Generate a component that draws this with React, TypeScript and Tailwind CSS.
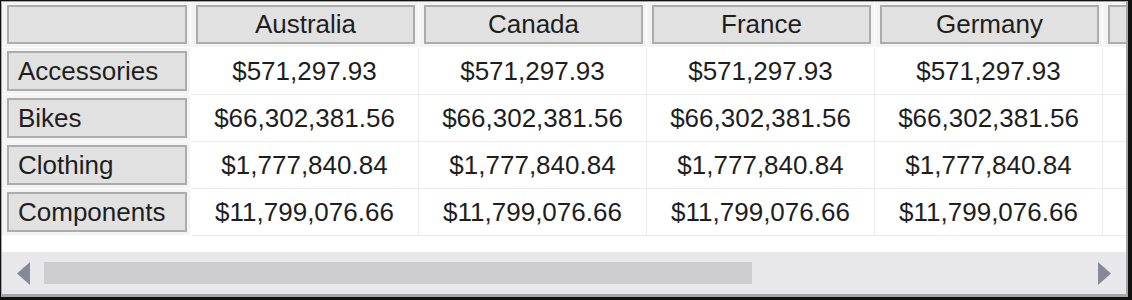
import React from 'react';

const COLUMNS = ['Australia', 'Canada', 'France', 'Germany', 'United Kingdom'];

const ROWS: { label: string; value: string }[] = [
  { label: 'Accessories', value: '$571,297.93' },
  { label: 'Bikes', value: '$66,302,381.56' },
  { label: 'Clothing', value: '$1,777,840.84' },
  { label: 'Components', value: '$11,799,076.66' },
];

function HeaderCell({ children, left }: { children?: React.ReactNode; left?: boolean }) {
  return (
    <div className="bg-[#f4f4f4] border-r border-b border-white pl-[5px] pr-[3px] pt-[3px] pb-[3px] flex">
      <div
        className={
          'flex-1 flex items-center border-2 border-[#acacac] bg-[#e1e1e1] whitespace-nowrap overflow-hidden ' +
          (left ? 'justify-start pl-[9px]' : 'justify-center')
        }
      >
        {children}
      </div>
    </div>
  );
}

function Arrow({ dir }: { dir: 'left' | 'right' }) {
  return (
    <svg width="13" height="23" viewBox="0 0 13 23" className="shrink-0">
      <path d={dir === 'left' ? 'M13 0 L0 11.5 L13 23 Z' : 'M0 0 L13 11.5 L0 23 Z'} fill="#868893" />
    </svg>
  );
}

export default function App() {
  return (
    <div
      className="w-[1132px] h-[300px] bg-[#111] pt-px pl-px pr-[4px] pb-[3px] text-[26px] text-[#1e1e1e]"
      style={{ fontFamily: '"Liberation Sans", Arial, sans-serif' }}
    >
      <div className="h-full flex flex-col bg-white border-t border-l border-r-2 border-b-[3px] border-[#a6a6a6] overflow-hidden">
        {/* Grid */}
        <div className="flex-1 overflow-hidden">
          <div className="grid grid-cols-[189px_repeat(5,228px)] grid-rows-[46px_repeat(4,47px)] w-max">
            <HeaderCell left />
            {COLUMNS.map(c => (
              <HeaderCell key={c}>{c}</HeaderCell>
            ))}
            {ROWS.map(r => (
              <React.Fragment key={r.label}>
                <HeaderCell left>{r.label}</HeaderCell>
                {COLUMNS.map(c => (
                  <div
                    key={c}
                    className="flex items-center justify-center border-r border-b border-[#ececec] whitespace-nowrap"
                  >
                    {r.value}
                  </div>
                ))}
              </React.Fragment>
            ))}
          </div>
        </div>

        {/* Horizontal scrollbar */}
        <div className="h-[42px] shrink-0 bg-[#e8e8ec] flex items-center px-[15px]">
          <Arrow dir="left" />
          <div className="flex-1 flex items-center pl-[14px] pr-[14px]">
            <div className="w-[708px] h-[22px] bg-[#cdcdd2]" />
          </div>
          <Arrow dir="right" />
        </div>
      </div>
    </div>
  );
}
